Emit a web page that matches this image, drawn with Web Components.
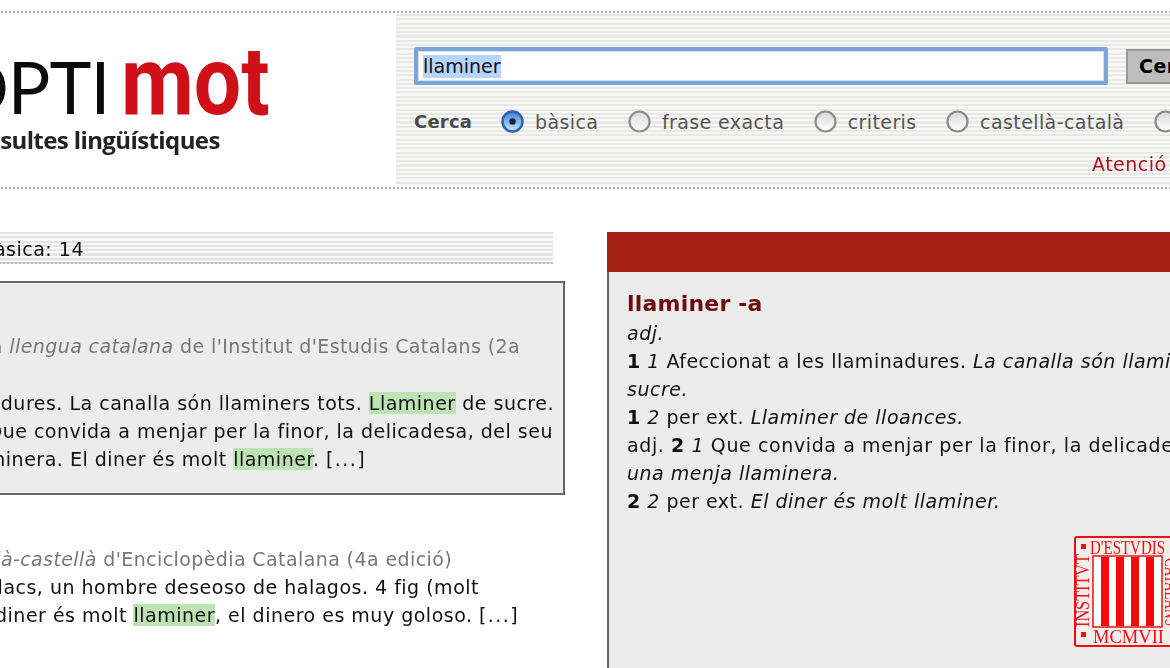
<!DOCTYPE html>
<html lang="ca">
<head>
<meta charset="utf-8">
<title>Optimot</title>
<style>
  html, body { margin: 0; height: 100%; overflow: hidden; background: #fff; }
  body { font-family: "DejaVu Sans", Verdana, sans-serif; font-size: 19px; letter-spacing: .5px; color: #111; }
</style>
</head>
<body>
<opt-page>
  <opt-header slot="header"></opt-header>
  <opt-results slot="left"></opt-results>
  <opt-entry slot="right"></opt-entry>
</opt-page>

<script>
/**
 * Outer frame of the page. The site is wider than the window, so the whole
 * thing is pulled left and clipped on both sides.
 */
class OptPage extends HTMLElement {
    constructor() {
        super();
        this.attachShadow({mode: "open"});
        this.shadowRoot.innerHTML = `
            <style>
                :host { display: block; width: 1170px; height: 668px; overflow: hidden; }
                .wrap { width: 1500px; margin-left: -110px; padding-top: 11px; filter: blur(.4px); }
                .cols { display: flex; align-items: flex-start; margin-top: 43px; }
                .left { width: 675px; margin-right: 42px; flex: none; }
                .right { width: 783px; flex: none; }
            </style>
            <div class="wrap">
                <slot name="header"></slot>
                <div class="cols">
                    <div class="left"><slot name="left"></slot></div>
                    <div class="right"><slot name="right"></slot></div>
                </div>
            </div>
        `;
    }
}

/**
 * Top band: logo on white, search form on a striped ground.
 */
class OptHeader extends HTMLElement {
    constructor() {
        super();
        this.attachShadow({mode: "open"});
        this.shadowRoot.innerHTML = `
            <style>
                :host { display: flex; height: 178px; border-top: 2px dotted #aaa; border-bottom: 2px dotted #aaa; box-sizing: border-box; }
                .logo { width: 506px; flex: none; padding-top: 31px; box-sizing: border-box; overflow: hidden; }
                .name { display: flex; align-items: baseline; height: 74px; padding-left: 62px; line-height: 74px; letter-spacing: 0; }
                .opti { font: 400 71px/74px Lato, sans-serif; color: #0b0b0b; letter-spacing: -1px; }
                .mot { font: 700 96px/74px Roboto, sans-serif; color: #cf1018; display: inline-block; transform: scaleX(.875); transform-origin: left; margin-left: 12px; }
                .sub { font: 700 24px/30px "Open Sans", sans-serif; color: #222; letter-spacing: -.6px; padding-left: 66px; margin-top: 7px; white-space: nowrap; }
                .form { flex: 1; margin: 1px 0; background: repeating-linear-gradient(#e8e8e6 0 2px, #f8f8f7 2px 4.3px); padding-top: 33px; padding-left: 18px; box-sizing: border-box; min-width: 0; }
                .row { display: flex; align-items: center; }
                .field { width: 694px; height: 38px; box-sizing: border-box; border: 4px solid #7aa5d6; box-shadow: inset 0 0 0 1px #cfe0f3; border-radius: 2px; background: #fff; display: flex; align-items: center; padding-left: 5px; letter-spacing: 0; flex: none; }
                .field span { background: #b5d5fd; line-height: 23px; }
                .btn { margin-left: 18px; width: 90px; height: 35px; box-sizing: border-box; border: 2px solid #999; background: #bdbdbd; font: bold 19px/31px "DejaVu Sans", sans-serif; padding-left: 11px; color: #000; flex: none; }
                .opts { margin-top: 25px; color: #555; white-space: nowrap; letter-spacing: .4px; }
                .opts b { width: 87px; flex: none; color: #4a4a4a; font-size: 18px; letter-spacing: .2px; }
                opt-radio { margin-right: 29.5px; flex: none; }
                .notice { margin: 20px 0 0 678px; color: #b3121a; white-space: nowrap; }
            </style>
            <div class="logo">
                <div class="name"><span class="opti">OPTI</span><span class="mot">mot</span></div>
                <div class="sub">Consultes lingüístiques</div>
            </div>
            <div class="form">
                <div class="row">
                    <div class="field"><span>llaminer</span></div>
                    <div class="btn">Cerca</div>
                </div>
                <div class="row opts">
                    <b>Cerca</b>
                    <opt-radio checked>bàsica</opt-radio>
                    <opt-radio>frase exacta</opt-radio>
                    <opt-radio>criteris</opt-radio>
                    <opt-radio>castellà-català</opt-radio>
                    <opt-radio>català-castellà</opt-radio>
                </div>
                <div class="notice">Atenció</div>
            </div>
        `;
    }
}

/**
 * Old Mac style radio button with its label in the slot.
 */
class OptRadio extends HTMLElement {
    constructor() {
        super();
        this.attachShadow({mode: "open"});
        const on = this.hasAttribute("checked");
        const ball = on
            ? `<circle cx="11.5" cy="11.5" r="10" fill="url(#b)" stroke="#2f62ad" stroke-width="2.4"/><circle cx="11.5" cy="11.5" r="3.2" fill="#14233f"/>`
            : `<circle cx="11.5" cy="11.5" r="10" fill="url(#g)" stroke="#8c8c8c" stroke-width="2.2"/>`;
        this.shadowRoot.innerHTML = `
            <style>
                :host { display: inline-flex; align-items: center; gap: 11px; }
                svg { width: 23px; height: 23px; flex: none; }
            </style>
            <svg viewBox="0 0 23 23">
                <defs>
                    <linearGradient id="b" x1="0" y1="0" x2="0" y2="1"><stop offset="0" stop-color="#3f80d6"/><stop offset="1" stop-color="#c4e9fc"/></linearGradient>
                    <linearGradient id="g" x1="0" y1="0" x2="0" y2="1"><stop offset="0" stop-color="#d8d8d8"/><stop offset="1" stop-color="#fff"/></linearGradient>
                </defs>
                ${ball}
            </svg>
            <slot></slot>
        `;
    }
}

/**
 * Left column: result count and the list of matches. The column starts off
 * screen, each line is held by its right end so the cut matches.
 */
class OptResults extends HTMLElement {
    constructor() {
        super();
        this.attachShadow({mode: "open"});
        this.shadowRoot.innerHTML = `
            <style>
                :host { display: block; white-space: nowrap; }
                .line { display: flex; justify-content: flex-end; width: calc((var(--end) + 110) * 1px); white-space: pre; }
                .card .line { width: calc((var(--end) + 108) * 1px); }
                .count { width: 663px; height: 32px; box-sizing: border-box; border-bottom: 2px dotted #bbb; background: repeating-linear-gradient(#e4e4e4 0 2px, #f9f9f9 2px 4.3px); line-height: 34px; }
                .card { height: 214px; box-sizing: border-box; margin-top: 17px; border: 2px solid #666; background: #ececec; padding: 49px 0 0 0; line-height: 28px; }
                .plain { margin-top: 50px; line-height: 28px; }
                .src { color: #777; letter-spacing: .4px; }
                .gap { height: 29px; }
                .more { letter-spacing: 1.4px; }
                mark { background: #bde3b5; color: inherit; }
            </style>
            <div class="count"><div class="line" style="--end:84"><span>Resultats de la cerca bàsica: 14</span></div></div>
            <div class="card">
                <div class="line src" style="--end:520"><span>Diccionari de la <i>llengua catalana</i> de l'Institut d'Estudis Catalans (2a</span></div>
                <div class="gap"></div>
                <div class="line" style="--end:554"><span>Afeccionat a les llaminadures. La canalla són llaminers tots. <mark>Llaminer</mark> de sucre.</span></div>
                <div class="line" style="--end:553"><span>Adj. 2 1 Que convida a menjar per la finor, la delicadesa, del seu</span></div>
                <div class="line" style="--end:366"><span>una menja llaminera. El diner és molt <mark>llaminer</mark>. <span class="more">[...]</span></span></div>
            </div>
            <div class="plain">
                <div class="line src" style="--end:452"><span>Diccionari <i>català-castellà</i> d'Enciclopèdia Catalana (4a edició)</span></div>
                <div class="line" style="--end:479"><span>un home delerós d'afalacs, un hombre deseoso de halagos. 4 fig (molt</span></div>
                <div class="line" style="--end:519"><span>atractiu) goloso -sa. El diner és molt <mark>llaminer</mark>, el dinero es muy goloso. <span class="more">[...]</span></span></div>
            </div>
        `;
    }
}

/**
 * Right column: the dictionary entry under a red bar, with the seal.
 */
class OptEntry extends HTMLElement {
    constructor() {
        super();
        this.attachShadow({mode: "open"});
        this.shadowRoot.innerHTML = `
            <style>
                :host { display: block; white-space: nowrap; }
                .bar { height: 40px; background: #a82015; }
                .body { height: 400px; box-sizing: border-box; border-left: 2px solid #666; background: #ececec; padding: 16px 0 0 18px; line-height: 28px; position: relative; }
                h2 { margin: 0; font-size: 22px; letter-spacing: .2px; line-height: 32px; color: #6e0b0b; }
                .pos { line-height: 27px; }
                .wide { letter-spacing: .6px; }
                opt-seal { position: absolute; left: 465px; top: 264px; }
            </style>
            <div class="bar"></div>
            <div class="body">
                <h2>llaminer -a</h2>
                <div class="pos"><i>adj.</i></div>
                <div><b>1</b> <i>1</i> Afeccionat a les llaminadures. <i>La canalla són llaminers tots. Llaminer de</i></div>
                <div><i>sucre.</i></div>
                <div><b>1</b> <i>2</i> per ext. <i>Llaminer de lloances.</i></div>
                <div class="wide">adj. <b>2</b> <i>1</i> Que convida a menjar per la finor, la delicadesa, del seu gust. <i>És</i></div>
                <div><i>una menja llaminera.</i></div>
                <div><b>2</b> <i>2</i> per ext. <i>El diner és molt llaminer.</i></div>
                <opt-seal></opt-seal>
            </div>
        `;
    }
}

/**
 * Red square seal of the Institut. Lettering runs round four sides.
 */
class OptSeal extends HTMLElement {
    constructor() {
        super();
        this.attachShadow({mode: "open"});
        let bars = "";
        for (let i = 0; i < 4; i++) {
            bars += `<rect x="${27 + i * 15}" y="21" width="8" height="69" fill="#f50a0a"/>`;
        }
        this.shadowRoot.innerHTML = `
            <style>
                :host { display: block; width: 112px; height: 112px; letter-spacing: 0; }
                svg { display: block; }
                text { font-family: "Liberation Serif", serif; fill: #f01010; }
            </style>
            <svg width="112" height="112" viewBox="0 0 112 112">
                <rect x="1" y="1" width="110" height="109" rx="2" fill="#f3eded" stroke="#f01010" stroke-width="2"/>
                <rect x="19" y="20" width="69" height="71" fill="#fff" stroke="#f01010" stroke-width="1.5"/>
                ${bars}
                <rect x="7" y="8" width="5" height="5" fill="#f01010"/>
                <rect x="7" y="96" width="5" height="5" fill="#f01010"/>
                <text x="16" y="18" font-size="18" textLength="75" lengthAdjust="spacingAndGlyphs">D'ESTVDIS</text>
                <text transform="translate(15 91) rotate(-90)" font-size="18" textLength="73" lengthAdjust="spacingAndGlyphs">INSTITVT</text>
                <text x="19" y="107" font-size="18" textLength="71" lengthAdjust="spacingAndGlyphs">MCMVII</text>
                <text transform="translate(91 22) rotate(90)" font-size="18" textLength="68" lengthAdjust="spacingAndGlyphs">CATALANS</text>
            </svg>
        `;
    }
}

customElements.define("opt-page", OptPage);
customElements.define("opt-header", OptHeader);
customElements.define("opt-radio", OptRadio);
customElements.define("opt-results", OptResults);
customElements.define("opt-entry", OptEntry);
customElements.define("opt-seal", OptSeal);
</script>
</body>
</html>
